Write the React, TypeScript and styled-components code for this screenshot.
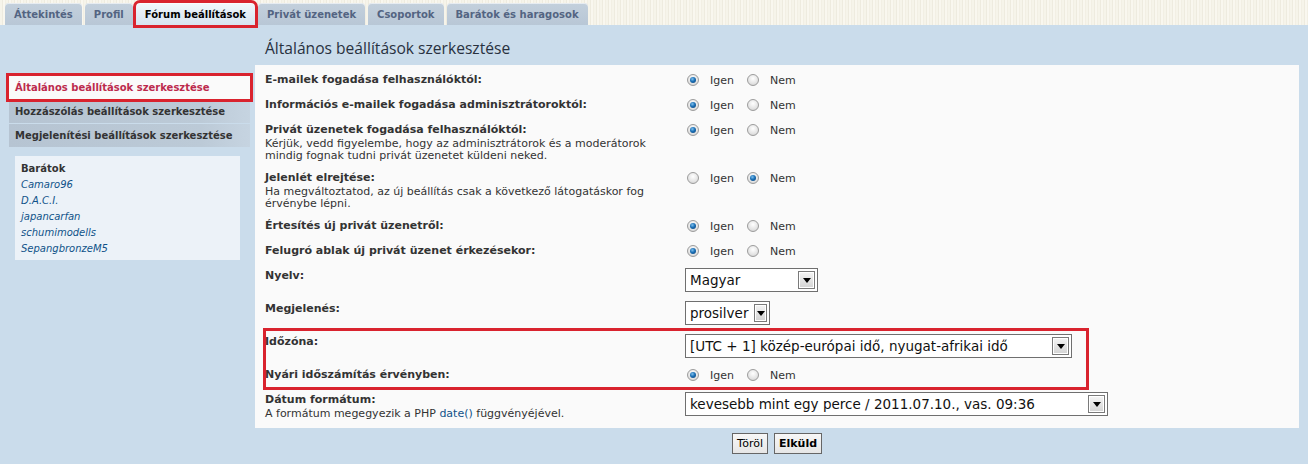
import React from 'react';
import styled, { createGlobalStyle } from 'styled-components';

const GlobalStyle = createGlobalStyle`
    html, body {
        margin: 0;
        padding: 0;
    }
    body {
        background: #cadceb;
        font-family: "DejaVu Sans", Verdana, sans-serif;
        color: #333333;
        min-height: 464px;
    }
`;

const Page = styled.div`
    width: 1308px;
    min-height: 464px;
    background: #cadceb;
`;

const TopStrip = styled.div`
    height: 25px;
    display: flex;
    align-items: flex-end;
    gap: 3px;
    padding-left: 5px;
    background: repeating-linear-gradient(90deg, #f6f4ea 0 2px, #eeebdf 2px 3px, #f9f7ef 3px 5px, #f2efe4 5px 6px);
`;

const Tab = styled.div<{ $active?: boolean }>`
    height: 22px;
    padding: 0 9px;
    display: flex;
    align-items: center;
    border-radius: 4px 4px 0 0;
    font-size: 10px;
    font-weight: bold;
    color: ${p => (p.$active ? '#000000' : '#536482')};
    background: ${p => (p.$active
        ? 'linear-gradient(#f2f7fb, #d7e4f0)'
        : 'linear-gradient(#c3d0dc, #b8c7d6)')};
    box-shadow: inset 0 1px 0 rgba(255, 255, 255, 0.6);
    outline: ${p => (p.$active ? '3px solid #d9232e' : 'none')};
    outline-offset: 0;
`;

const Body = styled.div`
    display: flex;
`;

const Sidebar = styled.div`
    width: 255px;
    flex-shrink: 0;
    padding-top: 51px;
`;

const Menu = styled.div`
    display: flex;
    flex-direction: column;
    gap: 1px;
    padding-left: 9px;
    width: 241px;
`;

const MenuItem = styled.div<{ $active?: boolean }>`
    height: 23px;
    display: flex;
    align-items: center;
    padding-left: 6px;
    font-size: 10px;
    font-weight: bold;
    color: ${p => (p.$active ? '#bc2a4d' : '#333333')};
    background: ${p => (p.$active
        ? '#fafafa'
        : 'linear-gradient(90deg, #b6c4d2 0%, #bccad7 80%, #c6d4e1 100%)')};
    outline: ${p => (p.$active ? '3px solid #d9232e' : 'none')};
    position: relative;
    z-index: ${p => (p.$active ? 1 : 0)};
`;

const FriendsBox = styled.div`
    margin: 9px 0 0 15px;
    width: 225px;
    box-sizing: border-box;
    padding: 5px 6px 3px;
    background: #ecf2f8;
    font-size: 10px;
    line-height: 16px;
`;

const FriendsTitle = styled.div`
    font-weight: bold;
    color: #333333;
`;

const FriendLink = styled.div`
    font-style: italic;
    color: #105289;
`;

const Main = styled.div`
    width: 1044px;
`;

const Heading = styled.h2`
    margin: 0;
    height: 40px;
    box-sizing: border-box;
    padding: 12px 0 0 10px;
    font-family: "Open Sans", "DejaVu Sans", sans-serif;
    font-weight: normal;
    font-size: 15.6px;
    line-height: 22px;
    color: #28313f;
`;

const Panel = styled.div`
    background: #fafafa;
    padding: 3px 0 4px 10px;
`;

const Group = styled.div`
    width: 822px;
    outline: 3px solid #d9232e;
    outline-offset: -1px;
`;

const Row = styled.div`
    display: grid;
    grid-template-columns: 420px 1fr;
    align-items: start;
    padding: 4px 0 5px;
`;

const LabelCol = styled.div``;

const Label = styled.div`
    font-size: 11px;
    font-weight: bold;
    line-height: 16px;
    color: #333333;
`;

const Desc = styled.div`
    font-size: 11px;
    line-height: 12px;
    margin-bottom: -1px;
    color: #333333;
`;

const DocLink = styled.span`
    color: #105289;
`;

const Controls = styled.div`
    display: flex;
    align-items: center;
    min-height: 16px;
`;

const Option = styled.label`
    display: flex;
    align-items: center;
    gap: 11px;
    margin-right: 11px;
    font-size: 11px;
    color: #333333;
`;

const Radio = styled.span<{ $checked?: boolean }>`
    width: 12px;
    height: 12px;
    margin-left: 2px;
    box-sizing: border-box;
    border-radius: 50%;
    border: 1px solid #9c9c9c;
    background: radial-gradient(circle at 50% 35%, #ffffff 0%, #e4e4e4 60%, #c8c8c8 100%);
    display: flex;
    align-items: center;
    justify-content: center;

    &::after {
        content: '';
        display: ${p => (p.$checked ? 'block' : 'none')};
        width: 6px;
        height: 6px;
        border-radius: 50%;
        background: radial-gradient(circle at 40% 35%, #7fc0ee 0%, #1a6fb5 45%, #0d3f73 100%);
    }
`;

const SelectBox = styled.div<{ $width: number }>`
    width: ${p => p.$width}px;
    height: 24px;
    box-sizing: border-box;
    border: 1px solid #6f6f6f;
    background: #ffffff;
    display: flex;
    align-items: center;
    justify-content: space-between;
    padding: 0 2px 0 4px;
    font-size: 13.5px;
    color: #111111;
`;

const SelectArrow = styled.span`
    width: 17px;
    height: 18px;
    box-sizing: border-box;
    border: 1px solid #7a7a7a;
    box-shadow: inset 0 0 0 1px #ffffff;
    background: linear-gradient(#f5f5f5, #d3d3d3);
    display: flex;
    align-items: center;
    justify-content: center;
    margin-left: 6px;

    &::after {
        content: '';
        width: 0;
        height: 0;
        border-left: 4px solid transparent;
        border-right: 4px solid transparent;
        border-top: 5px solid #000000;
    }
`;

const ButtonRow = styled.div`
    display: flex;
    justify-content: center;
    gap: 6px;
    padding-top: 5px;
`;

const Button = styled.button<{ $primary?: boolean }>`
    height: 21px;
    padding: 0 4px;
    border: 1px solid #666666;
    background: linear-gradient(#f7f7f7, #e6e6e6);
    font-family: "DejaVu Sans", Verdana, sans-serif;
    font-size: 11px;
    font-weight: ${p => (p.$primary ? 'bold' : 'normal')};
    color: #000000;
`;

const YesNo: React.FC<{ yes: boolean }> = ({ yes }) => (
    <Controls>
        <Option><Radio $checked={yes} />Igen</Option>
        <Option><Radio $checked={!yes} />Nem</Option>
    </Controls>
);

const Select: React.FC<{ width: number; value: string }> = ({ width, value }) => (
    <SelectBox $width={width}>
        <span>{value}</span>
        <SelectArrow />
    </SelectBox>
);

const tabs = ['Áttekintés', 'Profil', 'Fórum beállítások', 'Privát üzenetek', 'Csoportok', 'Barátok és haragosok'];
const friends = ['Camaro96', 'D.A.C.I.', 'japancarfan', 'schumimodells', 'SepangbronzeM5'];

const App: React.FC = () => {
    return (
        <Page>
            <GlobalStyle />
            <TopStrip>
                {tabs.map(t => (
                    <Tab key={t} $active={t === 'Fórum beállítások'}>{t}</Tab>
                ))}
            </TopStrip>
            <Body>
                <Sidebar>
                    <Menu>
                        <MenuItem $active>Általános beállítások szerkesztése</MenuItem>
                        <MenuItem>Hozzászólás beállítások szerkesztése</MenuItem>
                        <MenuItem>Megjelenítési beállítások szerkesztése</MenuItem>
                    </Menu>
                    <FriendsBox>
                        <FriendsTitle>Barátok</FriendsTitle>
                        {friends.map(f => (
                            <FriendLink key={f}>{f}</FriendLink>
                        ))}
                    </FriendsBox>
                </Sidebar>
                <Main>
                    <Heading>Általános beállítások szerkesztése</Heading>
                    <Panel>
                        <Row>
                            <Label>E-mailek fogadása felhasználóktól:</Label>
                            <YesNo yes />
                        </Row>
                        <Row>
                            <Label>Információs e-mailek fogadása adminisztrátoroktól:</Label>
                            <YesNo yes />
                        </Row>
                        <Row>
                            <LabelCol>
                                <Label>Privát üzenetek fogadása felhasználóktól:</Label>
                                <Desc>Kérjük, vedd figyelembe, hogy az adminisztrátorok és a moderátorok<br />mindig fognak tudni privát üzenetet küldeni neked.</Desc>
                            </LabelCol>
                            <YesNo yes />
                        </Row>
                        <Row>
                            <LabelCol>
                                <Label>Jelenlét elrejtése:</Label>
                                <Desc>Ha megváltoztatod, az új beállítás csak a következő látogatáskor fog<br />érvénybe lépni.</Desc>
                            </LabelCol>
                            <YesNo yes={false} />
                        </Row>
                        <Row>
                            <Label>Értesítés új privát üzenetről:</Label>
                            <YesNo yes />
                        </Row>
                        <Row>
                            <Label>Felugró ablak új privát üzenet érkezésekor:</Label>
                            <YesNo yes />
                        </Row>
                        <Row>
                            <Label>Nyelv:</Label>
                            <Select width={133} value="Magyar" />
                        </Row>
                        <Row>
                            <Label>Megjelenés:</Label>
                            <Select width={85} value="prosilver" />
                        </Row>
                        <Group>
                            <Row>
                                <Label>Időzóna:</Label>
                                <Select width={387} value="[UTC + 1] közép-európai idő, nyugat-afrikai idő" />
                            </Row>
                            <Row>
                                <Label>Nyári időszámítás érvényben:</Label>
                                <YesNo yes />
                            </Row>
                        </Group>
                        <Row>
                            <LabelCol>
                                <Label>Dátum formátum:</Label>
                                <Desc>A formátum megegyezik a PHP <DocLink>date()</DocLink> függvényéjével.</Desc>
                            </LabelCol>
                            <Select width={423} value="kevesebb mint egy perce / 2011.07.10., vas. 09:36" />
                        </Row>
                    </Panel>
                    <ButtonRow>
                        <Button type="button">Töröl</Button>
                        <Button type="button" $primary>Elküld</Button>
                    </ButtonRow>
                </Main>
            </Body>
        </Page>
    );
};

export default App;
